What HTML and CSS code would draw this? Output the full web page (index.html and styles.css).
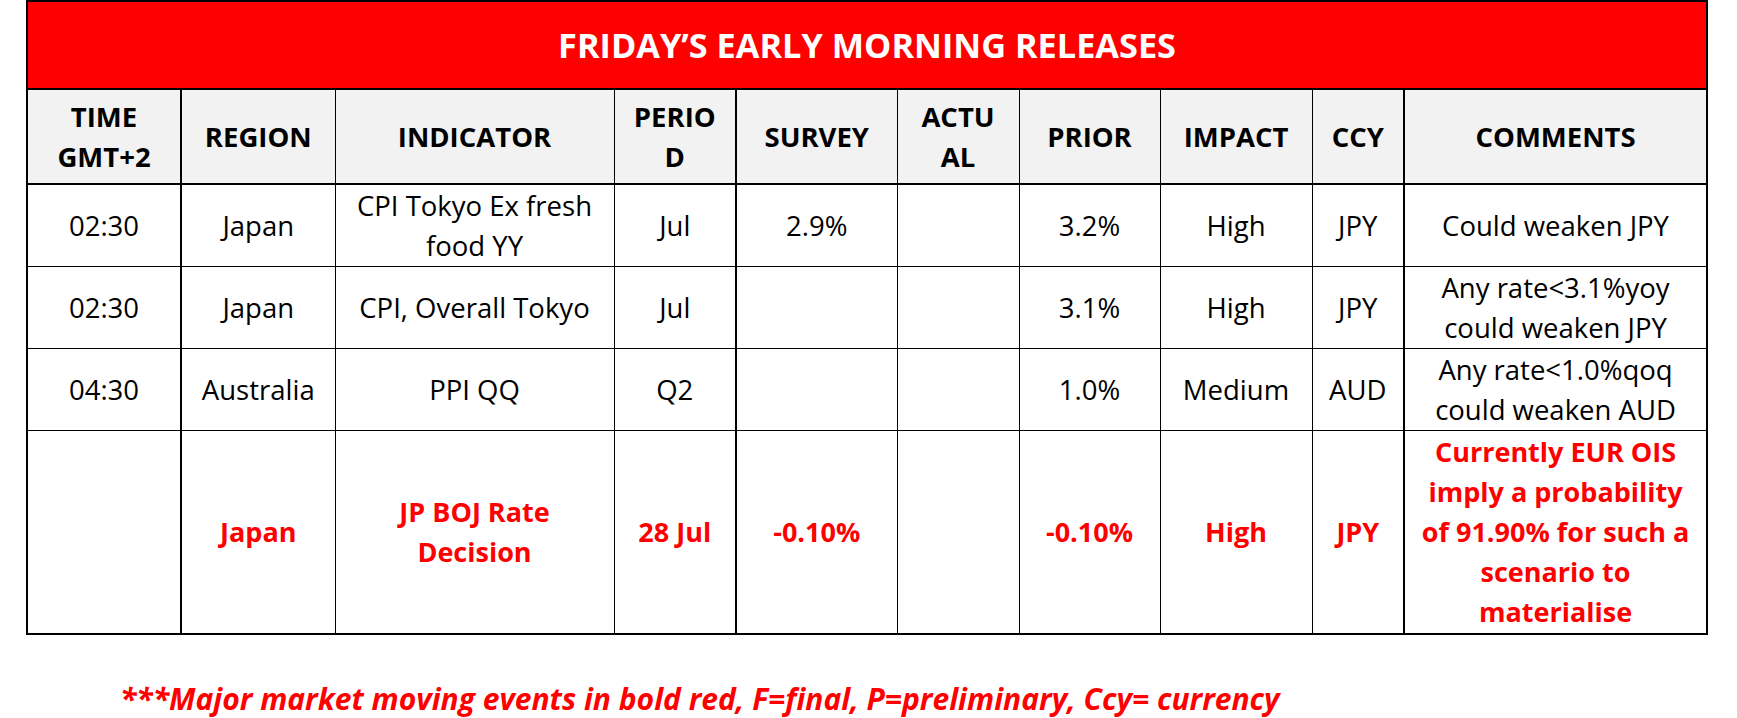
FILE: index.html
```html
<!DOCTYPE html>
<html lang="en">
<head>
<meta charset="utf-8">
<title>Friday's Early Morning Releases</title>
<link rel="stylesheet" href="styles.css">
</head>
<body>
<div class="page">
  <table class="releases">
    <colgroup>
      <col class="c-time"><col class="c-region"><col class="c-indicator"><col class="c-period"><col class="c-survey">
      <col class="c-actual"><col class="c-prior"><col class="c-impact"><col class="c-ccy"><col class="c-comments">
    </colgroup>
    <thead>
      <tr class="title-row"><th colspan="10">FRIDAY’S EARLY MORNING RELEASES</th></tr>
      <tr class="head-row">
        <th class="thick-r">TIME<br>GMT+2</th>
        <th>REGION</th>
        <th>INDICATOR</th>
        <th class="thick-r">PERIO<br>D</th>
        <th>SURVEY</th>
        <th>ACTU<br>AL</th>
        <th>PRIOR</th>
        <th>IMPACT</th>
        <th class="thick-r">CCY</th>
        <th>COMMENTS</th>
      </tr>
    </thead>
    <tbody>
      <tr class="row">
        <td class="thick-r">02:30</td><td>Japan</td><td>CPI Tokyo Ex fresh<br>food YY</td><td class="thick-r">Jul</td>
        <td>2.9%</td><td></td><td>3.2%</td><td>High</td><td class="thick-r">JPY</td><td>Could weaken JPY</td>
      </tr>
      <tr class="row">
        <td class="thick-r">02:30</td><td>Japan</td><td>CPI, Overall Tokyo</td><td class="thick-r">Jul</td>
        <td></td><td></td><td>3.1%</td><td>High</td><td class="thick-r">JPY</td><td>Any rate&lt;3.1%yoy<br>could weaken JPY</td>
      </tr>
      <tr class="row">
        <td class="thick-r">04:30</td><td>Australia</td><td>PPI QQ</td><td class="thick-r">Q2</td>
        <td></td><td></td><td>1.0%</td><td>Medium</td><td class="thick-r">AUD</td><td>Any rate&lt;1.0%qoq<br>could weaken AUD</td>
      </tr>
      <tr class="row major">
        <td class="thick-r"></td><td>Japan</td><td>JP BOJ Rate<br>Decision</td><td class="thick-r">28 Jul</td>
        <td>-0.10%</td><td></td><td>-0.10%</td><td>High</td><td class="thick-r">JPY</td>
        <td>Currently EUR OIS<br>imply a probability<br>of 91.90% for such a<br>scenario to<br>materialise</td>
      </tr>
    </tbody>
  </table>
  <p class="note">***Major market moving events in bold red, F=final, P=preliminary, Ccy= currency</p>
</div>
</body>
</html>
```
FILE: styles.css
```css
html, body {
  margin: 0;
  padding: 0;
  background: #ffffff;
}

.page {
  padding: 0 0 0 26px;
  font-family: "Open Sans", Lato, "Liberation Sans", sans-serif;
  color: #000000;
}

.releases {
  border-collapse: collapse;
  table-layout: fixed;
  width: 1680px;
  border: 2px solid #000000;
}

.c-time { width: 154px; }
.c-region { width: 154px; }
.c-indicator { width: 279px; }
.c-period { width: 122px; }
.c-survey { width: 161px; }
.c-actual { width: 122px; }
.c-prior { width: 141px; }
.c-impact { width: 152px; }
.c-ccy { width: 92px; }
.c-comments { width: 303px; }

.releases th,
.releases td {
  border: 1px solid #000000;
  padding: 0;
  text-align: center;
  vertical-align: middle;
  font-size: 27.5px;
  line-height: 40px;
  white-space: nowrap;
}

.releases .thick-r {
  border-right-width: 2px;
}

.title-row th {
  height: 86px;
  background: #ff0000;
  color: #ffffff;
  font-size: 34.3px;
  font-weight: 700;
  border: 2px solid #000000;
}

.head-row th {
  height: 93px;
  background: #f2f2f2;
  font-weight: 700;
  border-bottom: 2px solid #000000;
}

.row td {
  height: 81px;
  font-weight: 400;
}

.row.major td {
  height: 202px;
  color: #ff0000;
  font-weight: 700;
  font-size: 27px;
}

.note {
  margin: 44px 0 0 94px;
  color: #ff0000;
  font-size: 30px;
  line-height: 40px;
  font-weight: 700;
  font-style: italic;
}
```
